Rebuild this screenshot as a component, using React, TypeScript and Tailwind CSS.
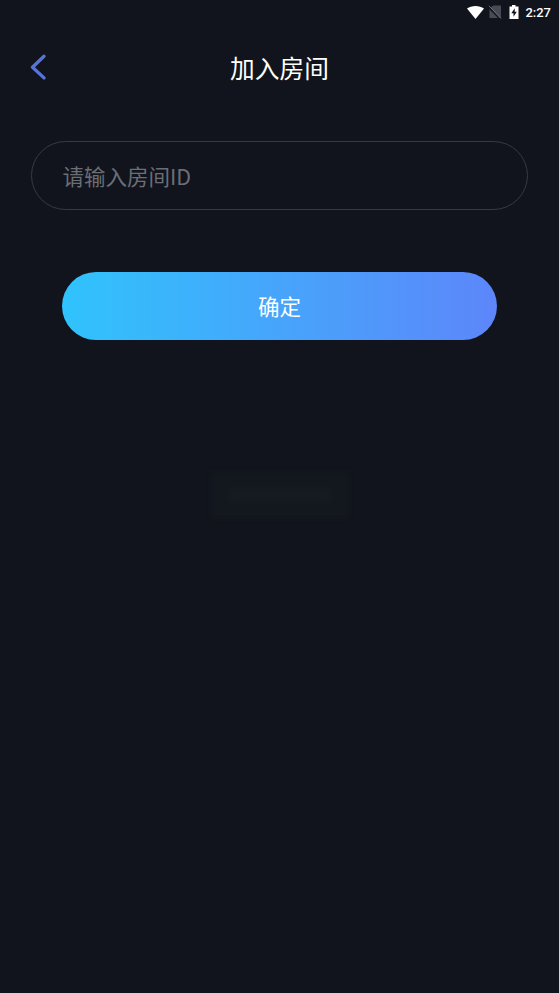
import React, { useState } from 'react';

const StatusBar: React.FC = () => (
  <div className="h-6 flex items-center justify-end pr-2">
    <svg width="17" height="13" viewBox="0 0 17 13" className="fill-white">
      <path d="M0 2.600C2.300.900 5.200 0 8.500 0S14.700.900 17 2.600L8.500 13z" />
    </svg>
    <svg width="14" height="14" viewBox="0 0 14 14" className="ml-1">
      <path d="M5 .5h8V13H1.500V4z" className="fill-[#484b53]" />
      <path d="M0 1.500L12.500 14.500" className="stroke-[#11141d]" strokeWidth="1.600" />
      <path d="M1 .8l12 12.700" className="stroke-[#70737a]" strokeWidth="1" />
    </svg>
    <svg width="10" height="14" viewBox="0 0 10 14" className="ml-[7px]">
      <path d="M3 0h3.500v1.500h3V14H.5V1.500H3z" className="fill-white" />
      <path d="M5.700 3.300L2.300 8.300h2.200v3.400l3.300-5H5.700z" className="fill-[#11141d]" />
    </svg>
    <span className="ml-1.5 text-[13px] leading-6 pt-px font-medium">2:27</span>
  </div>
);

const App: React.FC = () => {
  const [roomId, setRoomId] = useState('');

  return (
    <div className="min-h-screen bg-[#11141d] text-white font-[Roboto,'Noto_Sans_CJK_SC',sans-serif]">
      <StatusBar />

      <header className="h-[87px] grid grid-cols-[62px_1fr_62px] items-center">
        <button type="button" aria-label="返回" className="pl-[30px] pb-px">
          <svg width="17" height="26" viewBox="0 0 17 26" fill="none">
            <path d="M14 2.300L2.500 13.200l11.500 10.700" className="stroke-[#5674d8]" strokeWidth="3.300" strokeLinecap="round" strokeLinejoin="round" />
          </svg>
        </button>
        <h1 className="text-center text-[24.700px] leading-9 pt-1">加入房间</h1>
      </header>

      <form onSubmit={e => e.preventDefault()} className="px-[31px] pt-[30px]">
        <input
          placeholder="请输入房间ID"
          className="block w-full h-[69px] pl-[30.500px] pr-[31px] pb-px rounded-full border border-[#363a43] bg-transparent font-['Noto_Sans_CJK_SC',sans-serif] text-[21.500px] placeholder:text-[#6b6e75] outline-none"
          value={roomId}
          onChange={e => setRoomId(e.target.value)}
        />
        <div className="px-[31px] pt-[62px]">
          <button type="submit" className="w-full h-[68px] pt-1 rounded-full bg-linear-to-r/srgb from-[#30c3fc] to-[#5d86fa] text-[21.500px]">
            确定
          </button>
        </div>
      </form>

      {/* toast at the end of its fade-out */}
      <div className="mx-auto mt-[131px] w-[138px] h-12 bg-[#13171e] blur-[2px] flex items-center justify-center">
        <div className="w-[104px] h-4 bg-[#161b22] blur-[2px]" />
      </div>
    </div>
  );
};

export default App;
